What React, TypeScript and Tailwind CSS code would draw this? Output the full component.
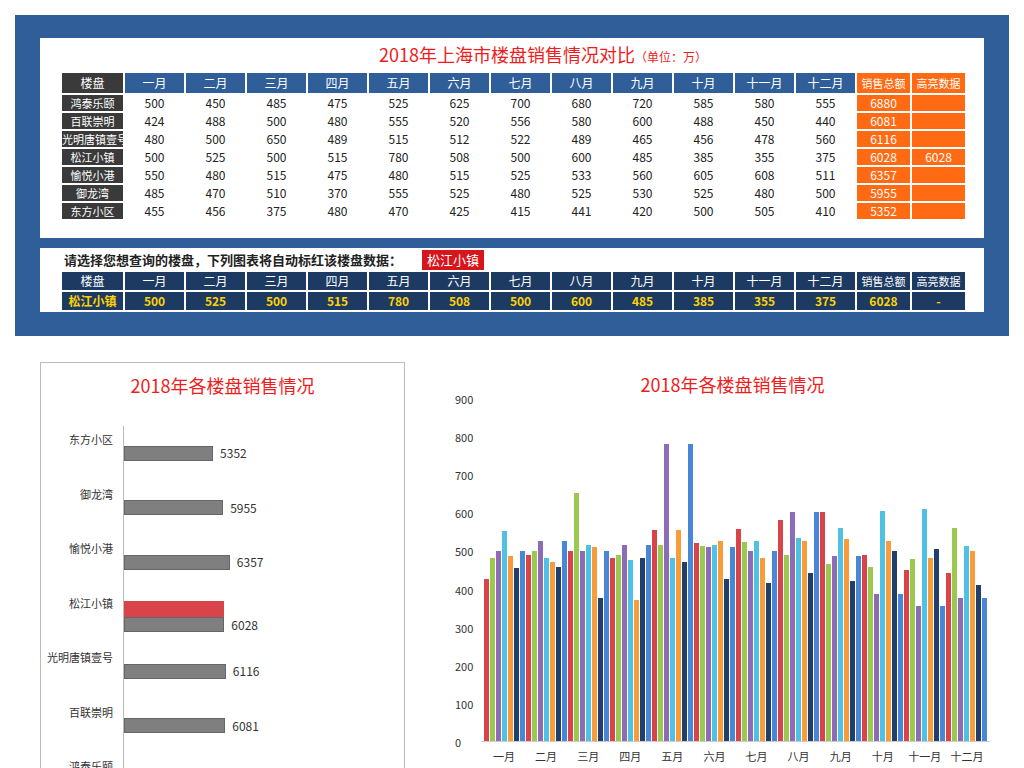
import React from "react";

const months = ["一月","二月","三月","四月","五月","六月","七月","八月","九月","十月","十一月","十二月"];
const rows: { name: string; v: number[]; total: number }[] = [
  { name: "鸿泰乐颐", v: [500,450,485,475,525,625,700,680,720,585,580,555], total: 6880 },
  { name: "百联崇明", v: [424,488,500,480,555,520,556,580,600,488,450,440], total: 6081 },
  { name: "光明唐镇壹号", v: [480,500,650,489,515,512,522,489,465,456,478,560], total: 6116 },
  { name: "松江小镇", v: [500,525,500,515,780,508,500,600,485,385,355,375], total: 6028 },
  { name: "愉悦小港", v: [550,480,515,475,480,515,525,533,560,605,608,511], total: 6357 },
  { name: "御龙湾", v: [485,470,510,370,555,525,480,525,530,525,480,500], total: 5955 },
  { name: "东方小区", v: [455,456,375,480,470,425,415,441,420,500,505,410], total: 5352 },
];
const sel = rows[3];
const font = { fontFamily: '"Noto Sans CJK SC", "Noto Sans", sans-serif' };

// bar order in each month group, with colors
const series = [
  { r: rows[1], c: "#d9444a" },
  { r: rows[2], c: "#9bc94f" },
  { r: rows[3], c: "#8c6bb8" },
  { r: rows[4], c: "#4fc1e3" },
  { r: rows[5], c: "#f89c3a" },
  { r: rows[6], c: "#1f3f6e" },
  { r: sel, c: "#4a86d8" },
];

const cols = "grid grid-cols-[61px_repeat(12,59px)_53px_53px] gap-x-[2px]";

export default function App() {
  return (
    <div className="w-[1024px] h-[768px] bg-white overflow-hidden relative" style={font}>
      <div className="mx-[15px] mt-[15px] h-[321px] bg-[#2f5e98] pt-[23px] px-[25px] flex flex-col gap-[10px]">
        <div className="bg-white h-[200px] pt-[4px] pl-[22px]">
          <div className="text-center text-[18px] text-[#ee1c1c] leading-[24px] pl-[40px]">
            2018年上海市楼盘销售情况对比<span className="text-[12px]">（单位：万）</span>
          </div>
          <div className={`${cols} mt-[4px] text-[12px] leading-[20px] text-center`}>
            <div className="bg-[#3a3a3a] text-white">楼盘</div>
            {months.map((m) => <div key={m} className="bg-[#2f5e98] text-white">{m}</div>)}
            <div className="bg-[#ff6a13] text-white text-[11px]">销售总额</div>
            <div className="bg-[#ff6a13] text-white text-[11px]">高亮数据</div>
          </div>
          {rows.map((r) => (
            <div key={r.name} className={`${cols} mt-[2px] text-[12px] leading-[16px] text-center text-[#222]`}>
              <div className="bg-[#3a3a3a] text-white whitespace-nowrap overflow-hidden text-[11px]">{r.name}</div>
              {r.v.map((x, i) => <div key={i}>{x}</div>)}
              <div className="bg-[#ff6a13] text-white">{r.total}</div>
              <div className="bg-[#ff6a13] text-white">{r === sel ? r.total : ""}</div>
            </div>
          ))}
        </div>
        <div className="bg-white h-[64px] pl-[22px]">
          <div className="flex items-center h-[24px] text-[13px] font-bold text-[#222]">
            <span className="ml-[2px] w-[358px]">请选择您想查询的楼盘，下列图表将自动标红该楼盘数据：</span>
            <span className="bg-[#d7151c] text-white font-normal px-[5px] leading-[20px]">松江小镇</span>
          </div>
          <div className={`${cols} text-[12px] leading-[18px] text-center`}>
            <div className="bg-[#1d3a63] text-white">楼盘</div>
            {months.map((m) => <div key={m} className="bg-[#1d3a63] text-white">{m}</div>)}
            <div className="bg-[#1d3a63] text-white text-[11px]">销售总额</div>
            <div className="bg-[#1d3a63] text-white text-[11px]">高亮数据</div>
          </div>
          <div className={`${cols} mt-[2px] text-[12px] leading-[18px] text-center font-bold text-[#ffd200]`}>
            <div className="bg-[#1d3a63]">{sel.name}</div>
            {sel.v.map((x, i) => <div key={i} className="bg-[#1d3a63]">{x}</div>)}
            <div className="bg-[#1d3a63]">{sel.total}</div>
            <div className="bg-[#1d3a63]">-</div>
          </div>
        </div>
      </div>

      <div className="flex mt-[26px] ml-[40px] gap-[50px]">
        <div className="w-[365px] h-[420px] border border-[#bbb] border-b-0 pt-[10px]">
          <div className="text-center text-[18px] text-[#ee1c1c] leading-[24px]">2018年各楼盘销售情况</div>
          <div className="mt-[29px] flex flex-col">
            {[...rows].reverse().map((r) => (
              <div key={r.name} className="h-[54.5px] flex items-center text-[11px] text-[#333]">
                <div className="w-[74px] text-right pr-[2px] self-start mt-[5px] whitespace-nowrap">{r.name}</div>
                <div className="ml-[8px] border-l border-[#bbb] h-full flex items-center">
                  <div className="flex flex-col">
                    {r === sel && <div className="h-[16px] bg-[#d9444a]" style={{ width: r.total * 0.01665 }} />}
                    <div className="h-[15px] bg-[#7f7f7f] border border-[#666]" style={{ width: r.total * 0.01665 }} />
                  </div>
                  <span className={`ml-[7px] text-[12px] ${r === sel ? "mt-[16px]" : ""}`}>{r.total}</span>
                </div>
              </div>
            ))}
          </div>
        </div>

        <div className="flex-1 pt-[10px] pr-[34px]">
          <div className="text-center text-[18px] text-[#ee1c1c] leading-[24px] pl-[20px]">2018年各楼盘销售情况</div>
          <div className="flex mt-[3px]">
            <div className="w-[26px] h-[343px] flex flex-col-reverse justify-between text-[11px] text-[#333]">
              {[0,100,200,300,400,500,600,700,800,900].map((t) => (
                <div key={t} className="leading-[12px] -my-[6px] text-left">{t}</div>
              ))}
            </div>
            <div className="flex-1">
              <div className="h-[343px] border-b border-[#ccc] flex items-end px-[2px]">
                {months.map((m, i) => (
                  <div key={m} className="flex-1 flex items-end justify-center gap-[1px] h-full">
                    {series.map((s, j) => (
                      <div key={j} className="w-[5px]" style={{ height: s.r.v[i] * 0.381, background: s.c }} />
                    ))}
                  </div>
                ))}
              </div>
              <div className="flex px-[2px] text-[11px] text-[#333] mt-[6px]">
                {months.map((m) => <div key={m} className="flex-1 text-center">{m}</div>)}
              </div>
            </div>
          </div>
        </div>
      </div>
    </div>
  );
}
